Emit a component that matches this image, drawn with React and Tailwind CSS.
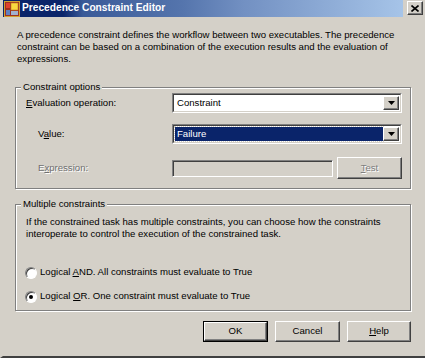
import React from "react";

const font = { fontFamily: '"Liberation Sans", Arial, sans-serif' };

function Combo({ value, selected }) {
  return (
    <div className="w-[230px] h-[20px] border-t border-l border-[#808080] border-b border-r border-b-white border-r-white">
      <div className="w-full h-full border-t border-l border-[#404040] border-b border-r border-b-[#d4d0c8] border-r-[#d4d0c8] bg-white flex items-center p-[1px]">
        <div className={"flex-1 h-full flex items-center pl-[2px] " + (selected ? "bg-[#0a246a] text-white outline outline-1 outline-dotted outline-[#d4d0c8]" : "text-black")}>
          {value}
        </div>
        <div className="w-[16px] h-full bg-[#d4d0c8] border-t border-l border-white border-b border-r border-b-[#404040] border-r-[#404040] flex items-center justify-center shadow-[inset_-1px_-1px_0_#808080]">
          <svg width="7" height="4" viewBox="0 0 7 4"><path d="M0 0h7L3.5 4z" fill="#000" /></svg>
        </div>
      </div>
    </div>
  );
}

function Button({ children, def, disabled, w }) {
  return (
    <div className={(def ? "border border-black " : "") + "h-[21px] " + w}>
      <div className="w-full h-full bg-[#d4d0c8] border-t border-l border-white border-b border-r border-b-[#404040] border-r-[#404040] shadow-[inset_-1px_-1px_0_#808080] flex items-center justify-center">
        <span className={disabled ? "text-[#808080] [text-shadow:1px_1px_0_#fff]" : "text-black"}>{children}</span>
      </div>
    </div>
  );
}

function Radio({ checked, children }) {
  return (
    <div className="flex items-center h-[13px]">
      <div className="w-[12px] h-[12px] rounded-full bg-white border border-[#808080] border-b-white border-r-white flex items-center justify-center shadow-[inset_1px_1px_0_#404040]">
        {checked && <div className="w-[4px] h-[4px] rounded-full bg-black" />}
      </div>
      <span className="ml-[3px]">{children}</span>
    </div>
  );
}

function Group({ label, className, children }) {
  return (
    <div className={"relative ml-[12px] mr-[14px] border border-[#808080] shadow-[1px_1px_0_#fff,inset_1px_1px_0_#fff] " + className}>
      <span className="absolute left-[5px] top-[-7px] bg-[#d4d0c8] px-[2px] leading-[12px]">{label}</span>
      {children}
    </div>
  );
}

export default function App() {
  return (
    <div style={font} className="w-[425px] h-[358px] bg-[#d4d0c8] text-[9.6px] text-black overflow-hidden flex flex-col border-l-[3px] border-l-[#d4d0c8] border-b-2 border-b-[#404040]">
      <div className="h-[17px] flex items-center shrink-0">
        <div className="w-[400px] h-full flex items-center bg-[linear-gradient(to_right,#0a246a_0%,#0a246a_15%,#3a5a98_20%,#5575ad_45%,#7290c2_60%,#a6c4e8_100%)]">
          <svg width="16" height="16" viewBox="0 0 16 16" className="ml-[1px]">
            <rect x="0" y="0" width="16" height="16" fill="#d0a030" />
            <rect x="1" y="1" width="14" height="14" fill="#a03020" />
            <rect x="2" y="2" width="4" height="5" fill="#e04030" />
            <rect x="7" y="2" width="7" height="7" fill="#f8d840" stroke="#c08020" strokeWidth="0.6" />
            <rect x="2" y="9" width="4" height="5" fill="#6080c0" />
            <rect x="7" y="10" width="7" height="4" fill="#a0b0d0" />
          </svg>
          <span className="ml-[2px] text-white font-bold text-[10.2px] leading-none">Precedence Constraint Editor</span>
        </div>
        <div className="ml-[4px] mt-[-1px] w-[16px] h-[14px] bg-[#d4d0c8] border-t border-l border-white border-b border-r border-b-[#404040] border-r-[#404040] shadow-[inset_-1px_-1px_0_#808080] flex items-center justify-center">
          <svg width="8" height="7" viewBox="0 0 8 7"><path d="M0.5 0.5L7.5 6.5M7.5 0.5L0.5 6.5" stroke="#000" strokeWidth="1.6" /></svg>
        </div>
      </div>

      <div className="mt-[12px] ml-[14px] mr-[24px] leading-[12px] h-[58px]">
        A precedence constraint defines the workflow between two executables. The precedence constraint can be based on a combination of the execution results and the evaluation of expressions.
      </div>

      <Group label="Constraint options" className="mt-[0px] h-[102px]">
        <div className="flex flex-col pt-[5px] pr-[6px]">
          <div className="flex items-center">
            <span className="ml-[10px] w-[146px]"><u>E</u>valuation operation:</span>
            <Combo value="Constraint" />
          </div>
          <div className="flex items-center mt-[11px]">
            <span className="ml-[22px] w-[134px]">V<u>a</u>lue:</span>
            <Combo value="Failure" selected />
          </div>
          <div className="flex items-center mt-[13px]">
            <span className="ml-[22px] w-[134px] text-[#707070] [text-shadow:1px_1px_0_#fff]">E<u>x</u>pression:</span>
            <div className="w-[161px] h-[17px] border border-[#808080] border-b-white border-r-white shadow-[inset_1px_1px_0_#404040] bg-[#d4d0c8]" />
            <div className="ml-[4px]">
              <Button disabled w="w-[65px] h-[22px]"><u>T</u>est</Button>
            </div>
          </div>
        </div>
      </Group>

      <Group label="Multiple constraints" className="mt-[15px] h-[107px]">
        <div className="pt-[11px] pl-[10px] pr-[10px] leading-[12px]">
          If the constrained task has multiple constraints, you can choose how the constraints interoperate to control the execution of the constrained task.
        </div>
        <div className="mt-[26px] ml-[9px] flex flex-col gap-[11px]">
          <Radio>Logical <u>A</u>ND. All constraints must evaluate to True</Radio>
          <Radio checked>Logical <u>O</u>R. One constraint must evaluate to True</Radio>
        </div>
      </Group>

      <div className="mt-[10px] flex justify-end pr-[14px] gap-[7px]">
        <Button def w="w-[65px]">OK</Button>
        <Button w="w-[65px]">Cancel</Button>
        <Button w="w-[64px]"><u>H</u>elp</Button>
      </div>
    </div>
  );
}
